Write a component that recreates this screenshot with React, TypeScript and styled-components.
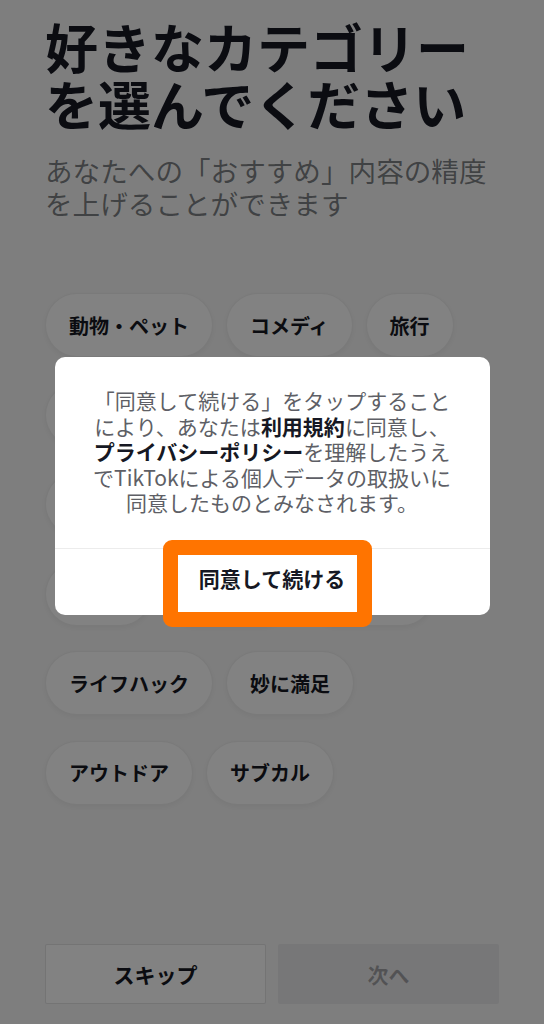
import styled, { createGlobalStyle } from 'styled-components';

const GlobalStyle = createGlobalStyle`
  * {
    box-sizing: border-box;
  }

  body {
    margin: 0;
    font-family: 'Noto Sans CJK JP', 'Noto Sans', sans-serif;
    color: #161823;
  }
`;

const Page = styled.main`
  display: flex;
  flex-direction: column;
  min-height: 100vh;
  padding: 0 45px 20px;
  background: #f8f8f8;
`;

const Title = styled.h1`
  margin: 18px 0 0;
  font-size: 53px;
  line-height: 57px;
  font-weight: 700;
  color: #161823;
`;

const Subtitle = styled.p`
  margin: 22px 0 0;
  font-size: 27.6px;
  line-height: 33px;
  color: rgba(22, 24, 35, 0.55);
`;

const ChipList = styled.div`
  display: flex;
  flex-direction: column;
  gap: 25.5px;
  margin-top: 73px;
`;

const ChipRow = styled.div`
  display: flex;
  gap: 13px;
`;

const Chip = styled.button`
  display: inline-flex;
  align-items: center;
  height: 64px;
  padding: 0 23px;
  border: 1px solid rgba(22, 24, 35, 0.07);
  border-radius: 32px;
  background: #fff;
  box-shadow: 0 2px 6px rgba(0, 0, 0, 0.05);
  font-family: inherit;
  font-size: 20px;
  font-weight: 700;
  color: #161823;
  white-space: nowrap;
`;

const Footer = styled.footer`
  display: grid;
  grid-template-columns: 1fr 1fr;
  gap: 12px;
  margin-top: auto;
`;

const FooterButton = styled.button<{ $disabled?: boolean }>`
  height: 60px;
  border-radius: 2px;
  border: 1px solid ${({ $disabled }) => ($disabled ? 'transparent' : 'rgba(22, 24, 35, 0.12)')};
  background: ${({ $disabled }) => ($disabled ? 'rgba(22, 24, 35, 0.06)' : '#fff')};
  color: ${({ $disabled }) => ($disabled ? 'rgba(22, 24, 35, 0.34)' : '#161823')};
  font-family: inherit;
  font-size: 21px;
  font-weight: 700;
`;

const Overlay = styled.div`
  position: fixed;
  inset: 0;
  display: flex;
  justify-content: center;
  align-items: flex-start;
  padding-top: 357px;
  background: rgba(0, 0, 0, 0.49);
`;

const Modal = styled.div`
  position: relative;
  width: 435px;
  border-radius: 10px;
  background: #fff;
`;

const ModalText = styled.p`
  margin: 0;
  padding: 31px 20px 32px;
  font-size: 21px;
  line-height: 25.5px;
  text-align: center;
  color: #5e5f66;
  white-space: nowrap;

  strong {
    font-weight: 700;
    color: #161823;
  }
`;

const ModalActions = styled.div`
  display: flex;
  align-items: center;
  justify-content: center;
  height: 67px;
  border-top: 1px solid #ececec;
`;

const ConfirmButton = styled.button`
  border: none;
  background: none;
  padding: 0;
  margin-top: -8px;
  font-family: inherit;
  font-size: 21px;
  font-weight: 700;
  color: #161823;
`;

// orange annotation box drawn over the confirm button
const Highlight = styled.div`
  position: absolute;
  top: 183px;
  left: 108px;
  width: 209px;
  height: 87px;
  border: 15px solid #ff7400;
  border-radius: 9px;
  pointer-events: none;
`;

const rows: string[][] = [
  ['動物・ペット', 'コメディ', '旅行'],
  ['料理', 'ビューティー', 'ダンス'],
  ['アート', 'ファッション', '音楽'],
  ['ゲーム', 'スポーツ', '科学技術'],
  ['ライフハック', '妙に満足'],
  ['アウトドア', 'サブカル'],
];

export default function App() {
  return (
    <>
      <GlobalStyle />
      <Page>
        <Title>
          好きなカテゴリー
          <br />
          を選んでください
        </Title>
        <Subtitle>
          あなたへの「おすすめ」内容の精度
          <br />
          を上げることができます
        </Subtitle>

        <ChipList>
          {rows.map((row, i) => (
            <ChipRow key={i}>
              {row.map((label) => (
                <Chip key={label}>{label}</Chip>
              ))}
            </ChipRow>
          ))}
        </ChipList>

        <Footer>
          <FooterButton>スキップ</FooterButton>
          <FooterButton $disabled>次へ</FooterButton>
        </Footer>
      </Page>

      <Overlay>
        <Modal>
          <ModalText>
            「同意して続ける」をタップすること
            <br />
            により、あなたは<strong>利用規約</strong>に同意し、
            <br />
            <strong>プライバシーポリシー</strong>を理解したうえ
            <br />
            でTikTokによる個人データの取扱いに
            <br />
            同意したものとみなされます。
          </ModalText>
          <ModalActions>
            <ConfirmButton>同意して続ける</ConfirmButton>
          </ModalActions>
          <Highlight />
        </Modal>
      </Overlay>
    </>
  );
}
